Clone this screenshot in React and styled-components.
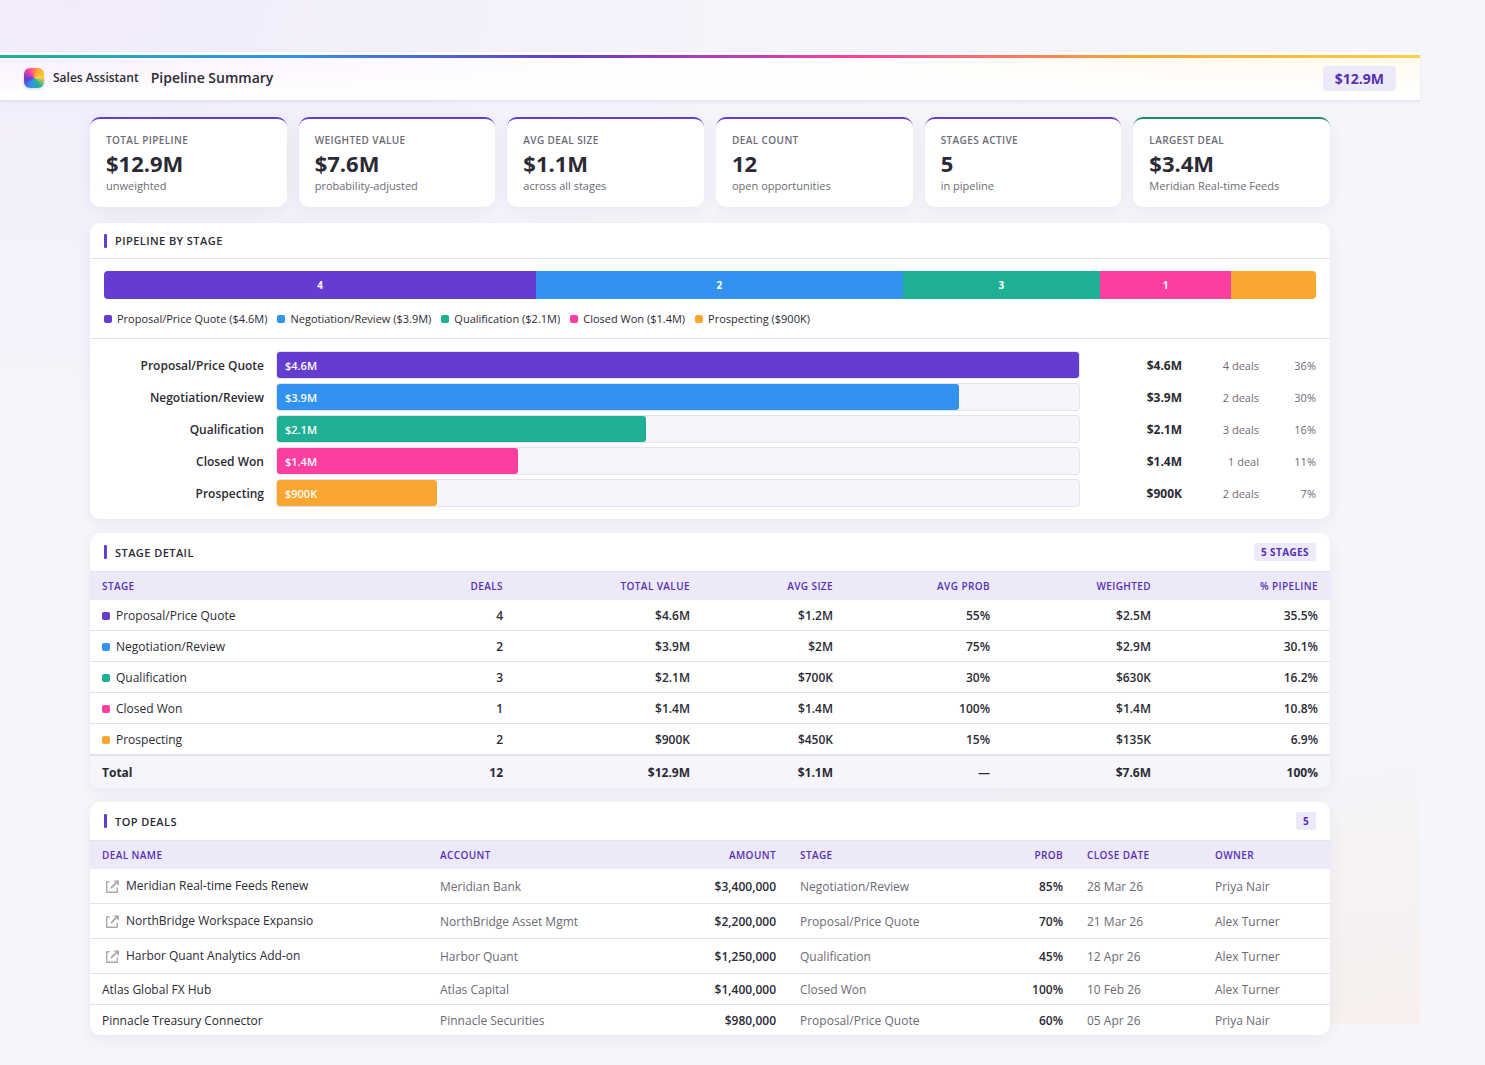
import React from 'react'
import styled, { createGlobalStyle } from 'styled-components'

const GlobalStyle = createGlobalStyle`
  * {
    box-sizing: border-box;
  }

  body {
    margin: 0;
    background: #f6f5fb;
    color: #2b2a35;
    font-family: "Open Sans", "Noto Sans", sans-serif;
    font-size: 12px;
    line-height: 16px;
  }
`

const Page = styled.div`
  margin-right: 65px;
  padding: 52px 0 30px;
  background:
    radial-gradient(ellipse 50% 40% at 5% 0%, rgba(160, 80, 240, 0.06), transparent) no-repeat 0 0 / 100% 1024px,
    radial-gradient(ellipse 50% 30% at 100% 100%, rgba(250, 166, 48, 0.07), transparent) no-repeat 0 0 / 100% 1024px;
`

const Header = styled.header`
  display: flex;
  align-items: center;
  justify-content: space-between;
  height: 49px;
  padding: 4px 24px 0;
  border-bottom: 1px solid #e4e3ec;
  background:
    linear-gradient(90deg, #1eb093, #3193ef, #643dd0, #fd3ea1, #fba630, #fdd043) no-repeat 0 3px / 100% 3px,
    linear-gradient(rgba(255, 255, 255, 0), #fff) no-repeat 0 6px / 100% 42px,
    linear-gradient(90deg, #faf0fe, #fff 50%, #fffaf0) no-repeat 0 6px / 100% 42px,
    #fff;
  box-shadow: 0 1px 4px rgba(40, 30, 90, 0.06);
`

const Brand = styled.div`
  display: flex;
  align-items: center;
`

const Logo = styled.span`
  width: 20px;
  height: 20px;
  margin-right: 9px;
  border-radius: 6px;
  background: conic-gradient(from 25deg, #fba630, #fdd043, #1eb093, #3193ef, #643dd0, #fd3ea1, #fba630);
  box-shadow: 0 1px 3px rgba(40, 30, 90, 0.2);
`

const BrandName = styled.span`
  margin-right: 12px;
  font-weight: 600;
`

const PageTitle = styled.h1`
  margin: 0;
  font-size: 14px;
  font-weight: 600;
`

const HeaderTotal = styled.span`
  padding: 4px 12px;
  border-radius: 4px;
  background: #ece9f8;
  color: #5630b4;
  font-size: 14px;
  font-weight: 700;
  line-height: 17px;
`

const Main = styled.main`
  display: flex;
  flex-direction: column;
  gap: 14px;
  max-width: 1240px;
  margin: 16px auto 0;
`

const Stats = styled.section`
  display: grid;
  grid-template-columns: repeat(6, 1fr);
  gap: 12px;
  margin-bottom: 2px;
`

const StatCard = styled.div`
  padding: 14px 16px 13px;
  border-top: 2px solid ${p => p.$accent || '#643dd0'};
  border-radius: 10px;
  background: #fff;
  box-shadow: 0 4px 16px rgba(40, 30, 90, 0.06);
`

const StatLabel = styled.div`
  color: #6b6a76;
  font-size: 10px;
  font-weight: 600;
  letter-spacing: 0.04em;
  line-height: 14px;
  text-transform: uppercase;
`

const StatValue = styled.div`
  margin: 4px 0 3px;
  font-size: 22px;
  font-weight: 700;
  line-height: 24px;
`

const StatNote = styled.div`
  color: #6b6a76;
  font-size: 11px;
  line-height: 16px;
`

const Panel = styled.section`
  overflow: hidden;
  border-radius: 10px;
  background: #fff;
  box-shadow: 0 4px 16px rgba(40, 30, 90, 0.06);
`

const PanelHeader = styled.div`
  display: flex;
  align-items: center;
  justify-content: space-between;
  padding: 10px 14px;
  border-bottom: 1px solid #e4e3ec;
`

const PanelTitle = styled.h2`
  display: flex;
  align-items: center;
  gap: 8px;
  margin: 0;
  font-size: 11px;
  font-weight: 600;
  letter-spacing: 0.04em;
  line-height: 15px;
  text-transform: uppercase;

  &::before {
    content: '';
    width: 3px;
    height: 14px;
    border-radius: 1px;
    background: #643dd0;
  }
`

const Pill = styled.span`
  padding: 2px 7px;
  border-radius: 3px;
  background: #ece9f8;
  color: #5630b4;
  font-size: 10px;
  font-weight: 700;
  letter-spacing: 0.04em;
  line-height: 14px;
`

const StackArea = styled.div`
  padding: 12px 14px;
  border-bottom: 1px solid #e4e3ec;
`

const Stack = styled.div`
  display: flex;
  height: 28px;
  overflow: hidden;
  border-radius: 4px;
`

const Segment = styled.div`
  display: flex;
  align-items: center;
  justify-content: center;
  background: ${p => p.$color};
  color: #fff;
  font-size: 10px;
  font-weight: 700;
`

const Legend = styled.div`
  display: flex;
  flex-wrap: wrap;
  gap: 10px;
  margin-top: 12px;
  font-size: 11px;
  line-height: 15px;
`

const LegendItem = styled.span`
  display: flex;
  align-items: center;
  gap: 5px;
`

const Swatch = styled.span`
  display: inline-block;
  width: 8px;
  height: 8px;
  border-radius: 2px;
  background: ${p => p.$color};
`

const Bars = styled.div`
  display: grid;
  gap: 4px;
  padding: 12px 14px;
`

const BarRow = styled.div`
  display: grid;
  grid-template-columns: 160px 1fr 90px 65px 45px;
  gap: 12px;
  align-items: center;
  color: #6b6a76;
  font-size: 11px;
  line-height: 16px;
  text-align: right;

  & > span {
    padding-top: 2px;
  }
`

const BarLabel = styled.span`
  color: #2b2a35;
  font-size: 12px;
  font-weight: 600;
`

const BarValue = styled.span`
  color: #2b2a35;
  font-size: 12px;
  font-weight: 700;
`

const Track = styled.div`
  height: 28px;
  border: 1px solid #e4e3ec;
  border-radius: 4px;
  background: #f6f5fb;
`

const Fill = styled.div`
  height: 100%;
  padding-left: 8px;
  border-radius: 3px;
  background: ${p => p.$color};
  color: #fff;
  font-size: 11px;
  font-weight: 600;
  line-height: 28px;
  text-align: left;
`

const Table = styled.table`
  width: 100%;
  border-collapse: separate;
  border-spacing: 0;
  table-layout: fixed;
`

const Th = styled.th`
  width: ${p => p.$width}px;
  padding: 7px 12px;
  background: #ece9f8;
  color: #5630b4;
  font-size: 10px;
  font-weight: 600;
  letter-spacing: 0.04em;
  line-height: 14px;
  text-align: ${p => (p.$right ? 'right' : 'left')};
  text-transform: uppercase;
`

const Td = styled.td`
  padding: 8px 12px 6px;
  border-bottom: 1px solid #e4e3ec;
  color: ${p => (p.$muted ? '#6b6a76' : '#2b2a35')};
  font-weight: ${p => (p.$right ? 600 : 400)};
  text-align: ${p => (p.$right ? 'right' : 'left')};
  white-space: nowrap;

  tbody tr:last-child & {
    border-bottom: 0;
  }

  tfoot & {
    padding: 9px 12px 7px;
    border-top: 2px solid #e4e3ec;
    border-bottom: 0;
    background: #f6f5fb;
    font-weight: 700;
  }
`

const StageName = styled.span`
  margin-left: 6px;
`

const OpenButton = styled.button`
  display: inline-flex;
  align-items: center;
  justify-content: center;
  width: 20px;
  height: 20px;
  margin-right: 4px;
  padding: 0;
  border: 0;
  background: none;
  color: #a9a9ad;
  vertical-align: middle;
`

const stages = [
  { name: 'Proposal/Price Quote', color: '#643dd0', amount: 4.6, value: '$4.6M', deals: 4, bar: 100, share: '36%', row: ['$4.6M', '$1.2M', '55%', '$2.5M', '35.5%'] },
  { name: 'Negotiation/Review', color: '#3193ef', amount: 3.9, value: '$3.9M', deals: 2, bar: 85, share: '30%', row: ['$3.9M', '$2M', '75%', '$2.9M', '30.1%'] },
  { name: 'Qualification', color: '#1eb093', amount: 2.1, value: '$2.1M', deals: 3, bar: 46, share: '16%', row: ['$2.1M', '$700K', '30%', '$630K', '16.2%'] },
  { name: 'Closed Won', color: '#fd3ea1', amount: 1.4, value: '$1.4M', deals: 1, bar: 30, share: '11%', row: ['$1.4M', '$1.4M', '100%', '$1.4M', '10.8%'] },
  { name: 'Prospecting', color: '#fba630', amount: 0.9, value: '$900K', deals: 2, bar: 20, share: '7%', row: ['$900K', '$450K', '15%', '$135K', '6.9%'] }
]

const stats = [
  { label: 'Total Pipeline', value: '$12.9M', note: 'unweighted' },
  { label: 'Weighted Value', value: '$7.6M', note: 'probability-adjusted' },
  { label: 'Avg Deal Size', value: '$1.1M', note: 'across all stages' },
  { label: 'Deal Count', value: '12', note: 'open opportunities' },
  { label: 'Stages Active', value: '5', note: 'in pipeline' },
  { label: 'Largest Deal', value: '$3.4M', note: 'Meridian Real-time Feeds', accent: '#1d8a6c' }
]

const stageColumns = [
  ['Stage', 300],
  ['Deals', 125, true],
  ['Total Value', 187, true],
  ['Avg Size', 143, true],
  ['Avg Prob', 157, true],
  ['Weighted', 161, true],
  ['% Pipeline', 167, true]
]

const dealColumns = [
  ['Deal Name', 338],
  ['Account', 232],
  ['Amount', 128, true],
  ['Stage', 212],
  ['Prob', 75, true],
  ['Close Date', 128],
  ['Owner', 127]
]

const deals = [
  { linked: true, cells: ['Meridian Real-time Feeds Renew', 'Meridian Bank', '$3,400,000', 'Negotiation/Review', '85%', '28 Mar 26', 'Priya Nair'] },
  { linked: true, cells: ['NorthBridge Workspace Expansio', 'NorthBridge Asset Mgmt', '$2,200,000', 'Proposal/Price Quote', '70%', '21 Mar 26', 'Alex Turner'] },
  { linked: true, cells: ['Harbor Quant Analytics Add-on', 'Harbor Quant', '$1,250,000', 'Qualification', '45%', '12 Apr 26', 'Alex Turner'] },
  { cells: ['Atlas Global FX Hub', 'Atlas Capital', '$1,400,000', 'Closed Won', '100%', '10 Feb 26', 'Alex Turner'] },
  { cells: ['Pinnacle Treasury Connector', 'Pinnacle Securities', '$980,000', 'Proposal/Price Quote', '60%', '05 Apr 26', 'Priya Nair'] }
]

const OpenIcon = () => (
  <svg width="14" height="14" viewBox="0 0 14 14" fill="none" stroke="currentColor" strokeWidth="1.4">
    <path d="M4.6 1.7H2.2Q1.7 1.7 1.7 2.2V11.8Q1.7 12.3 2.2 12.3H11.8Q12.3 12.3 12.3 11.8V7.6" />
    <path d="M6 8L10.8 3.2" strokeWidth="1.8" />
    <path d="M8.4 0.6H14V6Z" fill="currentColor" stroke="none" />
  </svg>
)

const HeadRow = ({ columns }) => (
  <thead>
    <tr>
      {columns.map(([title, width, right]) => (
        <Th key={title} scope="col" $width={width} $right={right}>{title}</Th>
      ))}
    </tr>
  </thead>
)

const PipelineByStage = () => (
  <Panel>
    <PanelHeader>
      <PanelTitle>Pipeline by Stage</PanelTitle>
    </PanelHeader>
    <StackArea>
      <Stack>
        {stages.map(s => (
          <Segment key={s.name} $color={s.color} style={{ flex: `${s.amount * 10} 0 0` }}>
            {s.amount > 1 && s.deals}
          </Segment>
        ))}
      </Stack>
      <Legend>
        {stages.map(s => (
          <LegendItem key={s.name}>
            <Swatch $color={s.color} />
            {`${s.name} (${s.value})`}
          </LegendItem>
        ))}
      </Legend>
    </StackArea>
    <Bars>
      {stages.map(s => (
        <BarRow key={s.name}>
          <BarLabel>{s.name}</BarLabel>
          <Track>
            <Fill $color={s.color} style={{ width: `${s.bar}%` }}>{s.value}</Fill>
          </Track>
          <BarValue>{s.value}</BarValue>
          <span>{`${s.deals} ${s.deals === 1 ? 'deal' : 'deals'}`}</span>
          <span>{s.share}</span>
        </BarRow>
      ))}
    </Bars>
  </Panel>
)

const StageDetail = () => (
  <Panel>
    <PanelHeader>
      <PanelTitle>Stage Detail</PanelTitle>
      <Pill>5 STAGES</Pill>
    </PanelHeader>
    <Table>
      <HeadRow columns={stageColumns} />
      <tbody>
        {stages.map(s => (
          <tr key={s.name}>
            <Td>
              <Swatch $color={s.color} />
              <StageName>{s.name}</StageName>
            </Td>
            <Td $right>{s.deals}</Td>
            {s.row.map((cell, i) => <Td key={i} $right>{cell}</Td>)}
          </tr>
        ))}
      </tbody>
      <tfoot>
        <tr>
          <Td>Total</Td>
          {['12', '$12.9M', '$1.1M', '—', '$7.6M', '100%'].map(cell => (
            <Td key={cell} $right>{cell}</Td>
          ))}
        </tr>
      </tfoot>
    </Table>
  </Panel>
)

const TopDeals = () => (
  <Panel>
    <PanelHeader>
      <PanelTitle>Top Deals</PanelTitle>
      <Pill>5</Pill>
    </PanelHeader>
    <Table>
      <HeadRow columns={dealColumns} />
      <tbody>
        {deals.map(({ linked, cells }) => (
          <tr key={cells[0]}>
            {cells.map((cell, i) => (
              <Td key={i} $right={dealColumns[i][2]} $muted={i > 0 && !dealColumns[i][2]}>
                {i === 0 && linked && (
                  <OpenButton type="button" aria-label={`Open ${cell}`}>
                    <OpenIcon />
                  </OpenButton>
                )}
                {cell}
              </Td>
            ))}
          </tr>
        ))}
      </tbody>
    </Table>
  </Panel>
)

const App = () => (
  <>
    <GlobalStyle />
    <Page>
      <Header>
        <Brand>
          <Logo />
          <BrandName>Sales Assistant</BrandName>
          <PageTitle>Pipeline Summary</PageTitle>
        </Brand>
        <HeaderTotal>$12.9M</HeaderTotal>
      </Header>
      <Main>
        <Stats>
          {stats.map(s => (
            <StatCard key={s.label} $accent={s.accent}>
              <StatLabel>{s.label}</StatLabel>
              <StatValue>{s.value}</StatValue>
              <StatNote>{s.note}</StatNote>
            </StatCard>
          ))}
        </Stats>
        <PipelineByStage />
        <StageDetail />
        <TopDeals />
      </Main>
    </Page>
  </>
)

export default App
